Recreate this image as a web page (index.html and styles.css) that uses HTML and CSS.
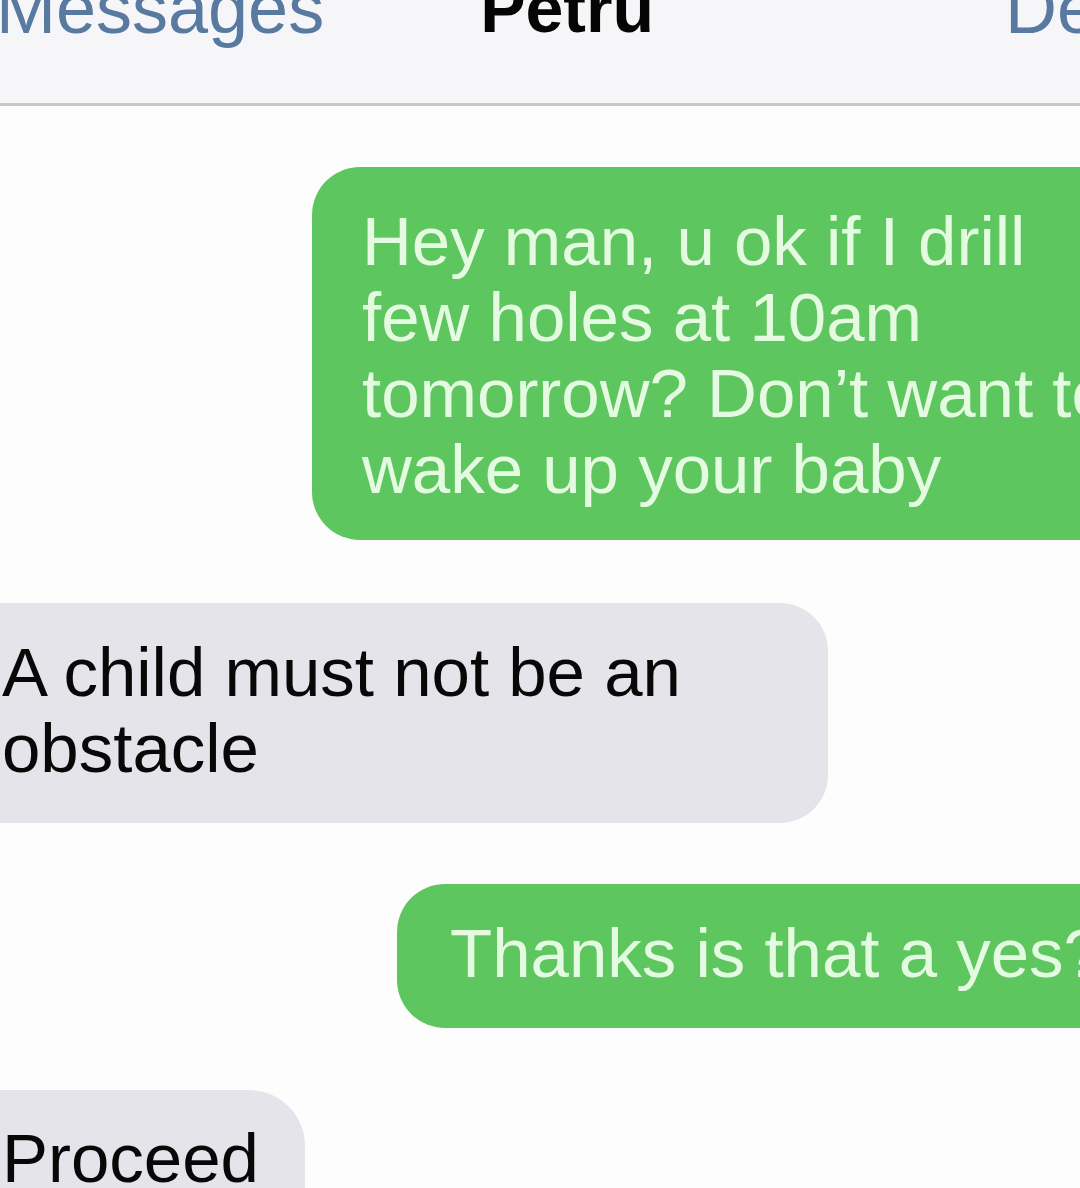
FILE: index.html
```html
<!DOCTYPE html>
<html lang="en">
<head>
    <meta charset="UTF-8">
    <meta name="viewport" content="width=device-width, initial-scale=1.0">
    <title>Petru</title>
    <link rel="stylesheet" href="styles.css">
</head>
<body>
    <div class="navbar">
        <div class="nav-row">
            <span class="nav-back">Messages</span>
            <span class="nav-title">Petru</span>
            <span class="nav-details">Details</span>
        </div>
    </div>

    <div class="thread">
        <div class="bubble sent first">Hey man, u ok if I drill few holes at 10am tomorrow? Don’t want to wake up your baby</div>
        <div class="bubble received reply">A child must not be an obstacle</div>
        <div class="bubble sent second">Thanks is that a yes?</div>
        <div class="bubble received last">Proceed</div>
    </div>
</body>
</html>
```

FILE: styles.css
```css
html, body {
    margin: 0;
    overflow: hidden;
}
body {
    background-color: #fdfdfd;
    font-family: "Liberation Sans", Arial, sans-serif;
    width: 1080px;
    height: 1188px;
}
.navbar {
    height: 103px;
    background-color: #f6f6f8;
    border-bottom: 3px solid #c8c8cc;
    overflow: hidden;
}
.nav-row {
    display: flex;
    margin-top: -28px;
    font-size: 72px;
    line-height: 72px;
    white-space: nowrap;
}
.nav-back {
    margin-left: -4px;
    color: #587aa0;
    flex-shrink: 0;
}
.nav-title {
    margin-left: 156px;
    font-weight: bold;
    color: #050505;
    font-size: 68px;
    flex-shrink: 0;
}
.nav-details {
    margin-left: 351px;
    color: #587aa0;
    flex-shrink: 0;
}
.thread {
    display: flex;
    flex-direction: column;
    padding-top: 61px;
}
.bubble {
    box-sizing: border-box;
    font-size: 69px;
    line-height: 76px;
    border-radius: 48px;
    flex-shrink: 0;
}
.sent {
    background-color: #5ec65e;
    color: #e4fbe2;
}
.received {
    background-color: #e5e4ea;
    color: #080808;
}
.first {
    margin-left: 312px;
    width: 860px;
    padding: 37px 40px 32px 50px;
}
.reply {
    margin-top: 63px;
    margin-left: -48px;
    width: 876px;
    padding: 32px 40px 36px 50px;
}
.second {
    margin-top: 61px;
    margin-left: 397px;
    width: 760px;
    padding: 32px 20px 36px 53px;
    white-space: nowrap;
}
.last {
    margin-top: 62px;
    margin-left: -48px;
    width: 353px;
    padding: 31px 20px 36px 50px;
    border-top-right-radius: 56px;
}
```
